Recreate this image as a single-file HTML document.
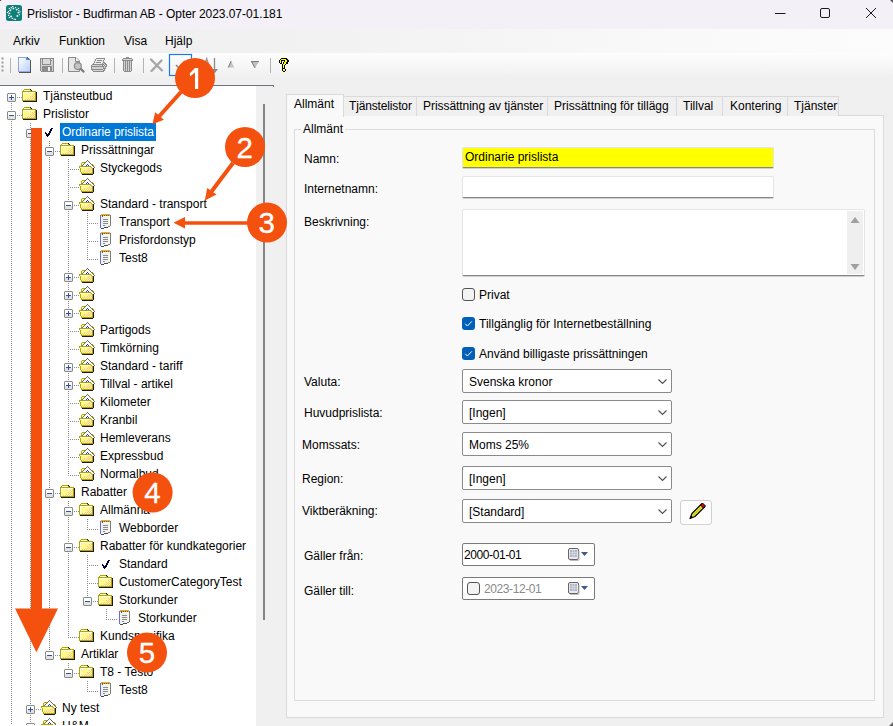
<!DOCTYPE html>
<html><head><meta charset="utf-8">
<style>
*{margin:0;padding:0;box-sizing:border-box}
html,body{width:893px;height:726px;overflow:hidden;background:#f0f0f0;font-family:"Liberation Sans",sans-serif;font-size:12px;color:#000}
.abs{position:absolute}
#title{position:absolute;left:0;top:0;width:893px;height:29px;background:#f3f0f8}
#menu{position:absolute;left:0;top:29px;width:893px;height:24px;background:linear-gradient(to right,#efefef 0%,#f1f1f1 30%,#f5f5f5 55%,#f9f9f9 75%,#fcfcfc 100%)}
#tb{position:absolute;left:0;top:53px;width:893px;height:25px;background:linear-gradient(#fdfdfd,#f0f0f0)}
.mi{position:absolute;top:34px;font-size:12px}
#tree{position:absolute;left:0;top:85px;width:274px;height:641px;background:#f0f0f0;border-top:1px solid #6d737d}
#treew{position:absolute;left:0;top:86px;width:256px;height:640px;background:#fff;overflow:hidden}
.tt{position:absolute;height:18px;line-height:18px;white-space:nowrap;font-size:12px;padding:0 2px 0 0}
.sel{background:#0078d7;color:#fff;padding:0 0 0 2px}
.dv{stroke:#8c8c8c;stroke-width:1;stroke-dasharray:1 1}
.dh{stroke:#8c8c8c;stroke-width:1;stroke-dasharray:1 1}
.tab{position:absolute;top:96px;height:20px;border:1px solid #dadada;border-bottom:none;background:#f0f0f0;line-height:18px;padding-left:5px;white-space:nowrap}
.lbl{position:absolute;white-space:nowrap;line-height:14px}
.combo{position:absolute;left:462px;width:210px;height:24px;border:1px solid #8a8a8a;border-radius:2px;background:#fff;line-height:24px;padding-left:6px}
.orn{position:absolute;border-radius:50%;background:#f4511e;color:#fff;font-size:28px;text-align:center;width:40px;height:40px;line-height:40px}
</style></head><body>
<div id="title">
  
  <div class="abs" style="left:27px;top:6px;font-size:12px;line-height:16px;letter-spacing:-0.06px">Prislistor - Budfirman AB - Opter 2023.07-01.181</div>
</div>
<div id="menu">
</div>
<div class="mi" style="left:13px">Arkiv</div>
<div class="mi" style="left:59px">Funktion</div>
<div class="mi" style="left:124px">Visa</div>
<div class="mi" style="left:165px">Hjälp</div>
<div id="tb"></div>

<svg class="abs" style="left:0;top:0" width="893" height="80">
 <defs><g id="i_save" shape-rendering="crispEdges"><rect x="0" y="0" width="14" height="1" fill="#8c8c8c"/><rect x="0" y="1" width="1" height="1" fill="#8c8c8c"/><rect x="1" y="1" width="1" height="1" fill="#d2d2d2"/><rect x="2" y="1" width="1" height="1" fill="#8c8c8c"/><rect x="3" y="1" width="7" height="1" fill="#dadada"/><rect x="10" y="1" width="1" height="1" fill="#8c8c8c"/><rect x="11" y="1" width="1" height="1" fill="#ececec"/><rect x="12" y="1" width="1" height="1" fill="#d2d2d2"/><rect x="13" y="1" width="1" height="1" fill="#8c8c8c"/><rect x="0" y="2" width="1" height="1" fill="#8c8c8c"/><rect x="1" y="2" width="1" height="1" fill="#d2d2d2"/><rect x="2" y="2" width="1" height="1" fill="#8c8c8c"/><rect x="3" y="2" width="7" height="1" fill="#dadada"/><rect x="10" y="2" width="2" height="1" fill="#8c8c8c"/><rect x="12" y="2" width="1" height="1" fill="#d2d2d2"/><rect x="13" y="2" width="1" height="1" fill="#8c8c8c"/><rect x="0" y="3" width="1" height="1" fill="#8c8c8c"/><rect x="1" y="3" width="1" height="1" fill="#d2d2d2"/><rect x="2" y="3" width="1" height="1" fill="#8c8c8c"/><rect x="3" y="3" width="7" height="1" fill="#dadada"/><rect x="10" y="3" width="1" height="1" fill="#8c8c8c"/><rect x="11" y="3" width="2" height="1" fill="#d2d2d2"/><rect x="13" y="3" width="1" height="1" fill="#8c8c8c"/><rect x="0" y="4" width="1" height="1" fill="#8c8c8c"/><rect x="1" y="4" width="1" height="1" fill="#d2d2d2"/><rect x="2" y="4" width="1" height="1" fill="#8c8c8c"/><rect x="3" y="4" width="7" height="1" fill="#dadada"/><rect x="10" y="4" width="1" height="1" fill="#8c8c8c"/><rect x="11" y="4" width="2" height="1" fill="#d2d2d2"/><rect x="13" y="4" width="1" height="1" fill="#8c8c8c"/><rect x="0" y="5" width="1" height="1" fill="#8c8c8c"/><rect x="1" y="5" width="1" height="1" fill="#d2d2d2"/><rect x="2" y="5" width="1" height="1" fill="#8c8c8c"/><rect x="3" y="5" width="7" height="1" fill="#dadada"/><rect x="10" y="5" width="1" height="1" fill="#8c8c8c"/><rect x="11" y="5" width="2" height="1" fill="#d2d2d2"/><rect x="13" y="5" width="1" height="1" fill="#8c8c8c"/><rect x="0" y="6" width="1" height="1" fill="#8c8c8c"/><rect x="1" y="6" width="1" height="1" fill="#d2d2d2"/><rect x="2" y="6" width="9" height="1" fill="#8c8c8c"/><rect x="11" y="6" width="2" height="1" fill="#d2d2d2"/><rect x="13" y="6" width="1" height="1" fill="#8c8c8c"/><rect x="0" y="7" width="1" height="1" fill="#8c8c8c"/><rect x="1" y="7" width="12" height="1" fill="#d2d2d2"/><rect x="13" y="7" width="1" height="1" fill="#8c8c8c"/><rect x="0" y="8" width="1" height="1" fill="#8c8c8c"/><rect x="1" y="8" width="1" height="1" fill="#d2d2d2"/><rect x="2" y="8" width="10" height="1" fill="#8c8c8c"/><rect x="12" y="8" width="1" height="1" fill="#d2d2d2"/><rect x="13" y="8" width="1" height="1" fill="#8c8c8c"/><rect x="0" y="9" width="1" height="1" fill="#8c8c8c"/><rect x="1" y="9" width="1" height="1" fill="#d2d2d2"/><rect x="2" y="9" width="6" height="1" fill="#8c8c8c"/><rect x="8" y="9" width="2" height="1" fill="#ececec"/><rect x="10" y="9" width="2" height="1" fill="#8c8c8c"/><rect x="12" y="9" width="1" height="1" fill="#d2d2d2"/><rect x="13" y="9" width="1" height="1" fill="#8c8c8c"/><rect x="0" y="10" width="1" height="1" fill="#8c8c8c"/><rect x="1" y="10" width="1" height="1" fill="#d2d2d2"/><rect x="2" y="10" width="6" height="1" fill="#8c8c8c"/><rect x="8" y="10" width="2" height="1" fill="#ececec"/><rect x="10" y="10" width="2" height="1" fill="#8c8c8c"/><rect x="12" y="10" width="1" height="1" fill="#d2d2d2"/><rect x="13" y="10" width="1" height="1" fill="#8c8c8c"/><rect x="0" y="11" width="1" height="1" fill="#8c8c8c"/><rect x="1" y="11" width="1" height="1" fill="#d2d2d2"/><rect x="2" y="11" width="6" height="1" fill="#8c8c8c"/><rect x="8" y="11" width="2" height="1" fill="#ececec"/><rect x="10" y="11" width="2" height="1" fill="#8c8c8c"/><rect x="12" y="11" width="1" height="1" fill="#d2d2d2"/><rect x="13" y="11" width="1" height="1" fill="#8c8c8c"/><rect x="0" y="12" width="1" height="1" fill="#8c8c8c"/><rect x="1" y="12" width="1" height="1" fill="#d2d2d2"/><rect x="2" y="12" width="6" height="1" fill="#8c8c8c"/><rect x="8" y="12" width="2" height="1" fill="#ececec"/><rect x="10" y="12" width="2" height="1" fill="#8c8c8c"/><rect x="12" y="12" width="1" height="1" fill="#d2d2d2"/><rect x="13" y="12" width="1" height="1" fill="#8c8c8c"/><rect x="1" y="13" width="13" height="1" fill="#8c8c8c"/></g><g id="i_print" shape-rendering="crispEdges"><rect x="6" y="0" width="9" height="1" fill="#8c8c8c"/><rect x="5" y="1" width="1" height="1" fill="#8c8c8c"/><rect x="6" y="1" width="8" height="1" fill="#ececec"/><rect x="14" y="1" width="1" height="1" fill="#8c8c8c"/><rect x="5" y="2" width="1" height="1" fill="#8c8c8c"/><rect x="6" y="2" width="1" height="1" fill="#ececec"/><rect x="7" y="2" width="5" height="1" fill="#8c8c8c"/><rect x="12" y="2" width="1" height="1" fill="#ececec"/><rect x="13" y="2" width="1" height="1" fill="#8c8c8c"/><rect x="4" y="3" width="1" height="1" fill="#8c8c8c"/><rect x="5" y="3" width="8" height="1" fill="#ececec"/><rect x="13" y="3" width="1" height="1" fill="#8c8c8c"/><rect x="4" y="4" width="1" height="1" fill="#8c8c8c"/><rect x="5" y="4" width="1" height="1" fill="#ececec"/><rect x="6" y="4" width="5" height="1" fill="#8c8c8c"/><rect x="11" y="4" width="2" height="1" fill="#ececec"/><rect x="13" y="4" width="2" height="1" fill="#8c8c8c"/><rect x="3" y="5" width="1" height="1" fill="#8c8c8c"/><rect x="4" y="5" width="8" height="1" fill="#ececec"/><rect x="12" y="5" width="1" height="1" fill="#8c8c8c"/><rect x="13" y="5" width="1" height="1" fill="#d2d2d2"/><rect x="14" y="5" width="2" height="1" fill="#8c8c8c"/><rect x="2" y="6" width="12" height="1" fill="#8c8c8c"/><rect x="14" y="6" width="1" height="1" fill="#d2d2d2"/><rect x="15" y="6" width="2" height="1" fill="#8c8c8c"/><rect x="1" y="7" width="1" height="1" fill="#8c8c8c"/><rect x="2" y="7" width="10" height="1" fill="#d2d2d2"/><rect x="12" y="7" width="1" height="1" fill="#8c8c8c"/><rect x="13" y="7" width="1" height="1" fill="#d2d2d2"/><rect x="14" y="7" width="1" height="1" fill="#8c8c8c"/><rect x="15" y="7" width="1" height="1" fill="#d2d2d2"/><rect x="16" y="7" width="1" height="1" fill="#8c8c8c"/><rect x="1" y="8" width="13" height="1" fill="#8c8c8c"/><rect x="14" y="8" width="1" height="1" fill="#d2d2d2"/><rect x="15" y="8" width="2" height="1" fill="#8c8c8c"/><rect x="1" y="9" width="1" height="1" fill="#8c8c8c"/><rect x="2" y="9" width="11" height="1" fill="#d2d2d2"/><rect x="13" y="9" width="1" height="1" fill="#8c8c8c"/><rect x="14" y="9" width="1" height="1" fill="#d2d2d2"/><rect x="15" y="9" width="1" height="1" fill="#8c8c8c"/><rect x="1" y="10" width="1" height="1" fill="#8c8c8c"/><rect x="2" y="10" width="11" height="1" fill="#d2d2d2"/><rect x="13" y="10" width="3" height="1" fill="#8c8c8c"/><rect x="1" y="11" width="12" height="1" fill="#8c8c8c"/><rect x="13" y="11" width="1" height="1" fill="#d2d2d2"/><rect x="14" y="11" width="1" height="1" fill="#8c8c8c"/><rect x="2" y="12" width="1" height="1" fill="#8c8c8c"/><rect x="3" y="12" width="10" height="1" fill="#d2d2d2"/><rect x="13" y="12" width="2" height="1" fill="#8c8c8c"/><rect x="3" y="13" width="11" height="1" fill="#8c8c8c"/></g><g id="i_trash" shape-rendering="crispEdges"><rect x="4" y="0" width="3" height="1" fill="#8c8c8c"/><rect x="1" y="1" width="9" height="1" fill="#8c8c8c"/><rect x="0" y="2" width="1" height="1" fill="#8c8c8c"/><rect x="1" y="2" width="9" height="1" fill="#d2d2d2"/><rect x="10" y="2" width="1" height="1" fill="#8c8c8c"/><rect x="0" y="3" width="11" height="1" fill="#8c8c8c"/><rect x="1" y="4" width="1" height="1" fill="#8c8c8c"/><rect x="2" y="4" width="1" height="1" fill="#d2d2d2"/><rect x="3" y="4" width="1" height="1" fill="#8c8c8c"/><rect x="4" y="4" width="1" height="1" fill="#d2d2d2"/><rect x="5" y="4" width="1" height="1" fill="#8c8c8c"/><rect x="6" y="4" width="1" height="1" fill="#d2d2d2"/><rect x="7" y="4" width="1" height="1" fill="#8c8c8c"/><rect x="8" y="4" width="1" height="1" fill="#d2d2d2"/><rect x="9" y="4" width="1" height="1" fill="#8c8c8c"/><rect x="1" y="5" width="1" height="1" fill="#8c8c8c"/><rect x="2" y="5" width="1" height="1" fill="#d2d2d2"/><rect x="3" y="5" width="1" height="1" fill="#8c8c8c"/><rect x="4" y="5" width="1" height="1" fill="#d2d2d2"/><rect x="5" y="5" width="1" height="1" fill="#8c8c8c"/><rect x="6" y="5" width="1" height="1" fill="#d2d2d2"/><rect x="7" y="5" width="1" height="1" fill="#8c8c8c"/><rect x="8" y="5" width="1" height="1" fill="#d2d2d2"/><rect x="9" y="5" width="1" height="1" fill="#8c8c8c"/><rect x="1" y="6" width="1" height="1" fill="#8c8c8c"/><rect x="2" y="6" width="1" height="1" fill="#d2d2d2"/><rect x="3" y="6" width="1" height="1" fill="#8c8c8c"/><rect x="4" y="6" width="1" height="1" fill="#d2d2d2"/><rect x="5" y="6" width="1" height="1" fill="#8c8c8c"/><rect x="6" y="6" width="1" height="1" fill="#d2d2d2"/><rect x="7" y="6" width="1" height="1" fill="#8c8c8c"/><rect x="8" y="6" width="1" height="1" fill="#d2d2d2"/><rect x="9" y="6" width="1" height="1" fill="#8c8c8c"/><rect x="1" y="7" width="1" height="1" fill="#8c8c8c"/><rect x="2" y="7" width="1" height="1" fill="#d2d2d2"/><rect x="3" y="7" width="1" height="1" fill="#8c8c8c"/><rect x="4" y="7" width="1" height="1" fill="#d2d2d2"/><rect x="5" y="7" width="1" height="1" fill="#8c8c8c"/><rect x="6" y="7" width="1" height="1" fill="#d2d2d2"/><rect x="7" y="7" width="1" height="1" fill="#8c8c8c"/><rect x="8" y="7" width="1" height="1" fill="#d2d2d2"/><rect x="9" y="7" width="1" height="1" fill="#8c8c8c"/><rect x="1" y="8" width="1" height="1" fill="#8c8c8c"/><rect x="2" y="8" width="1" height="1" fill="#d2d2d2"/><rect x="3" y="8" width="1" height="1" fill="#8c8c8c"/><rect x="4" y="8" width="1" height="1" fill="#d2d2d2"/><rect x="5" y="8" width="1" height="1" fill="#8c8c8c"/><rect x="6" y="8" width="1" height="1" fill="#d2d2d2"/><rect x="7" y="8" width="1" height="1" fill="#8c8c8c"/><rect x="8" y="8" width="1" height="1" fill="#d2d2d2"/><rect x="9" y="8" width="1" height="1" fill="#8c8c8c"/><rect x="1" y="9" width="1" height="1" fill="#8c8c8c"/><rect x="2" y="9" width="1" height="1" fill="#d2d2d2"/><rect x="3" y="9" width="1" height="1" fill="#8c8c8c"/><rect x="4" y="9" width="1" height="1" fill="#d2d2d2"/><rect x="5" y="9" width="1" height="1" fill="#8c8c8c"/><rect x="6" y="9" width="1" height="1" fill="#d2d2d2"/><rect x="7" y="9" width="1" height="1" fill="#8c8c8c"/><rect x="8" y="9" width="1" height="1" fill="#d2d2d2"/><rect x="9" y="9" width="1" height="1" fill="#8c8c8c"/><rect x="1" y="10" width="1" height="1" fill="#8c8c8c"/><rect x="2" y="10" width="1" height="1" fill="#d2d2d2"/><rect x="3" y="10" width="1" height="1" fill="#8c8c8c"/><rect x="4" y="10" width="1" height="1" fill="#d2d2d2"/><rect x="5" y="10" width="1" height="1" fill="#8c8c8c"/><rect x="6" y="10" width="1" height="1" fill="#d2d2d2"/><rect x="7" y="10" width="1" height="1" fill="#8c8c8c"/><rect x="8" y="10" width="1" height="1" fill="#d2d2d2"/><rect x="9" y="10" width="1" height="1" fill="#8c8c8c"/><rect x="1" y="11" width="1" height="1" fill="#8c8c8c"/><rect x="2" y="11" width="1" height="1" fill="#d2d2d2"/><rect x="3" y="11" width="1" height="1" fill="#8c8c8c"/><rect x="4" y="11" width="1" height="1" fill="#d2d2d2"/><rect x="5" y="11" width="1" height="1" fill="#8c8c8c"/><rect x="6" y="11" width="1" height="1" fill="#d2d2d2"/><rect x="7" y="11" width="1" height="1" fill="#8c8c8c"/><rect x="8" y="11" width="1" height="1" fill="#d2d2d2"/><rect x="9" y="11" width="1" height="1" fill="#8c8c8c"/><rect x="1" y="12" width="1" height="1" fill="#8c8c8c"/><rect x="2" y="12" width="1" height="1" fill="#d2d2d2"/><rect x="3" y="12" width="1" height="1" fill="#8c8c8c"/><rect x="4" y="12" width="1" height="1" fill="#d2d2d2"/><rect x="5" y="12" width="1" height="1" fill="#8c8c8c"/><rect x="6" y="12" width="1" height="1" fill="#d2d2d2"/><rect x="7" y="12" width="1" height="1" fill="#8c8c8c"/><rect x="8" y="12" width="1" height="1" fill="#d2d2d2"/><rect x="9" y="12" width="1" height="1" fill="#8c8c8c"/><rect x="1" y="13" width="1" height="1" fill="#8c8c8c"/><rect x="2" y="13" width="1" height="1" fill="#d2d2d2"/><rect x="3" y="13" width="1" height="1" fill="#8c8c8c"/><rect x="4" y="13" width="1" height="1" fill="#d2d2d2"/><rect x="5" y="13" width="1" height="1" fill="#8c8c8c"/><rect x="6" y="13" width="1" height="1" fill="#d2d2d2"/><rect x="7" y="13" width="1" height="1" fill="#8c8c8c"/><rect x="8" y="13" width="1" height="1" fill="#d2d2d2"/><rect x="9" y="13" width="1" height="1" fill="#8c8c8c"/><rect x="2" y="14" width="7" height="1" fill="#8c8c8c"/></g><g id="i_help" shape-rendering="crispEdges"><rect x="2" y="0" width="6" height="1" fill="#000000"/><rect x="1" y="1" width="1" height="1" fill="#000000"/><rect x="2" y="1" width="5" height="1" fill="#ffff00"/><rect x="7" y="1" width="2" height="1" fill="#000000"/><rect x="0" y="2" width="1" height="1" fill="#000000"/><rect x="1" y="2" width="1" height="1" fill="#ffff00"/><rect x="2" y="2" width="4" height="1" fill="#000000"/><rect x="6" y="2" width="2" height="1" fill="#ffff00"/><rect x="8" y="2" width="2" height="1" fill="#000000"/><rect x="0" y="3" width="1" height="1" fill="#000000"/><rect x="1" y="3" width="1" height="1" fill="#ffff00"/><rect x="2" y="3" width="1" height="1" fill="#000000"/><rect x="3" y="3" width="2" height="1" fill="#f0f0f0"/><rect x="5" y="3" width="1" height="1" fill="#000000"/><rect x="6" y="3" width="2" height="1" fill="#ffff00"/><rect x="8" y="3" width="2" height="1" fill="#000000"/><rect x="0" y="4" width="1" height="1" fill="#000000"/><rect x="1" y="4" width="1" height="1" fill="#ffff00"/><rect x="2" y="4" width="1" height="1" fill="#000000"/><rect x="3" y="4" width="1" height="1" fill="#f0f0f0"/><rect x="4" y="4" width="1" height="1" fill="#000000"/><rect x="5" y="4" width="2" height="1" fill="#ffff00"/><rect x="7" y="4" width="2" height="1" fill="#000000"/><rect x="1" y="5" width="2" height="1" fill="#000000"/><rect x="3" y="5" width="1" height="1" fill="#f0f0f0"/><rect x="4" y="5" width="1" height="1" fill="#000000"/><rect x="5" y="5" width="2" height="1" fill="#ffff00"/><rect x="7" y="5" width="2" height="1" fill="#000000"/><rect x="3" y="6" width="1" height="1" fill="#000000"/><rect x="4" y="6" width="2" height="1" fill="#ffff00"/><rect x="6" y="6" width="1" height="1" fill="#000000"/><rect x="3" y="7" width="1" height="1" fill="#000000"/><rect x="4" y="7" width="1" height="1" fill="#ffff00"/><rect x="5" y="7" width="1" height="1" fill="#000000"/><rect x="3" y="8" width="1" height="1" fill="#000000"/><rect x="4" y="8" width="1" height="1" fill="#ffff00"/><rect x="5" y="8" width="1" height="1" fill="#000000"/><rect x="3" y="9" width="1" height="1" fill="#000000"/><rect x="4" y="9" width="1" height="1" fill="#ffff00"/><rect x="5" y="9" width="1" height="1" fill="#000000"/><rect x="3" y="10" width="3" height="1" fill="#000000"/><rect x="3" y="11" width="1" height="1" fill="#000000"/><rect x="4" y="11" width="2" height="1" fill="#ffff00"/><rect x="6" y="11" width="1" height="1" fill="#000000"/><rect x="3" y="12" width="1" height="1" fill="#000000"/><rect x="4" y="12" width="2" height="1" fill="#ffff00"/><rect x="6" y="12" width="1" height="1" fill="#000000"/><rect x="4" y="13" width="2" height="1" fill="#000000"/></g>
  <linearGradient id="ndg" x1="0" y1="0" x2="1" y2="1"><stop offset="0" stop-color="#ffffff"/><stop offset="1" stop-color="#b4d0f8"/></linearGradient>
 </defs>
 <!-- title icon -->
 <rect x="6" y="5" width="16" height="16" rx="2.5" fill="#0f7f7a"/>
 <g fill="#fff"><circle cx="13.4" cy="8.4" r="0.95"/><circle cx="16.7" cy="9.6" r="0.95"/><circle cx="18.4" cy="12.6" r="0.95"/><circle cx="17.4" cy="15.9" r="0.95"/><circle cx="10.4" cy="10.3" r="0.95"/><circle cx="9.4" cy="13.4" r="0.95"/><circle cx="11.1" cy="16.4" r="0.95"/><circle cx="15.6" cy="7.6" r="0.7"/><circle cx="18.5" cy="8.4" r="0.7"/><circle cx="18.9" cy="10.6" r="0.7"/><circle cx="20.0" cy="11.9" r="0.7"/><circle cx="19.4" cy="14.6" r="0.7"/><circle cx="11.3" cy="7.8" r="0.7"/><circle cx="9.4" cy="8.4" r="0.7"/><circle cx="8.4" cy="11.4" r="0.7"/><circle cx="7.6" cy="12.6" r="0.7"/><circle cx="8.6" cy="15.4" r="0.7"/><circle cx="9.4" cy="17.5" r="0.7"/><circle cx="12.2" cy="18.2" r="0.7"/><circle cx="14.2" cy="19.2" r="0.7"/><circle cx="15.4" cy="19.4" r="0.7"/><circle cx="12.7" cy="6.5" r="0.7"/></g>
 <!-- window controls -->
 <path d="M775 13.5h10.5" stroke="#1a1a1a" stroke-width="1"/>
 <rect x="820.5" y="8.5" width="9" height="9" rx="1.5" fill="none" stroke="#1a1a1a" stroke-width="1"/>
 <path d="M866 8l10 10M876 8l-10 10" stroke="#1a1a1a" stroke-width="1"/>
 <!-- toolbar -->
 <g fill="#9a9a9a"><rect x="1.5" y="57.5" width="2" height="2"/><rect x="1.5" y="61.5" width="2" height="2"/><rect x="1.5" y="65.5" width="2" height="2"/><rect x="1.5" y="69.5" width="2" height="2"/></g>
 <g stroke="#b4b4b4" stroke-width="1"><path d="M10.5 58v15M62.5 58v15M114.5 58v15M143.5 58v15M270.5 58v15"/></g>
 <!-- new -->
 <g shape-rendering="crispEdges">
  <rect x="19" y="58" width="11" height="14" fill="url(#ndg)"/>
  <rect x="18" y="57" width="9" height="1" fill="#8ea2de"/>
  <rect x="18" y="57" width="1" height="15" fill="#8ea2de"/>
  <rect x="19" y="71" width="11" height="1" fill="#a4a6e4"/>
  <rect x="30" y="60" width="1" height="13" fill="#555"/>
  <rect x="19" y="72" width="12" height="1" fill="#555"/>
  <rect x="27" y="57" width="1" height="1" fill="#555"/><rect x="28" y="58" width="1" height="1" fill="#555"/><rect x="29" y="59" width="1" height="1" fill="#555"/>
  <rect x="26" y="58" width="2" height="1" fill="#3a98f0"/><rect x="26" y="59" width="3" height="1" fill="#3a98f0"/>
 </g>
 <use href="#i_save" x="40" y="58"/>
 <!-- preview -->
 <path d="M68.5 57.5h7.5l3.5 3.5v10.5h-11z" fill="#e6e6e6" stroke="#8a8a8a"/>
 <path d="M75.5 57.5v4h4" fill="#f6f6f6" stroke="#8a8a8a"/>
 <circle cx="77.9" cy="66.1" r="3.5" fill="#c4c4c4" stroke="#8a8a8a" stroke-width="1.1"/>
 <path d="M80.8 69l2.8 2.6" stroke="#7a7a7a" stroke-width="2.2" stroke-linecap="round"/>
 <use href="#i_print" x="90" y="58"/>
 <use href="#i_trash" x="122" y="57"/>
 <!-- X -->
 <path d="M151 59.5l11 11M161.5 60.5l-10 10.5" stroke="#a6a6a6" stroke-width="2.4" stroke-linecap="round"/>
 <!-- blue box -->
 <rect x="169.5" y="54.5" width="22" height="21" fill="none" stroke="#1a7be0" stroke-width="1.2"/>
 <path d="M176 65l3 3 6-7" fill="none" stroke="#888" stroke-width="1.5"/>
 <!-- sort -->
 <path d="M203.5 68.5l3.2-10 3.3 10" fill="none" stroke="#9a9a9a" stroke-width="1.3"/>
 <path d="M214.5 58v13" stroke="#8a8a8a" stroke-width="1.3"/>
 <path d="M211 69h7l-3.5 4.5z" fill="#8a8a8a"/>
 <!-- up/down -->
 <path d="M228 67.5h6.2l-3.2-6.4z" fill="#c4c4c4"/>
 <path d="M228.3 67.5l2.8-6.4" stroke="#7a7a7a" stroke-width="1"/>
 <path d="M251 61.5h8l-4 6.5z" fill="#c0c0c0"/>
 <path d="M251 61.5h8M251.5 61.5l3.5 6.5" stroke="#7a7a7a" stroke-width="1"/>
 <!-- help -->
 <use href="#i_help" x="279" y="58"/>
</svg>
<div id="tree"></div>
<div id="treew">
</div>
<div class="abs" style="left:0;top:86px;width:256px;height:639px;overflow:hidden">
<svg width="256" height="639" viewBox="0 86 256 639" style="position:absolute;left:0;top:0">
<defs><g id="folder" shape-rendering="crispEdges"><rect x="2" y="2" width="6" height="1" fill="#b0a600"/><rect x="8" y="2" width="1" height="1" fill="#1a1a1a"/><rect x="1" y="3" width="1" height="1" fill="#b0a600"/><rect x="2" y="3" width="6" height="1" fill="#fffff0"/><rect x="8" y="3" width="1" height="1" fill="#b0a600"/><rect x="9" y="3" width="1" height="1" fill="#1a1a1a"/><rect x="0" y="4" width="14" height="1" fill="#b0a600"/><rect x="0" y="5" width="1" height="1" fill="#b0a600"/><rect x="1" y="5" width="12" height="1" fill="#fffff0"/><rect x="13" y="5" width="1" height="1" fill="#b0a600"/><rect x="14" y="5" width="1" height="1" fill="#1a1a1a"/><rect x="0" y="6" width="1" height="1" fill="#b0a600"/><rect x="1" y="6" width="1" height="1" fill="#fffff0"/><rect x="2" y="6" width="10" height="1" fill="#fff98c"/><rect x="12" y="6" width="1" height="1" fill="#f9c79a"/><rect x="13" y="6" width="1" height="1" fill="#b0a600"/><rect x="14" y="6" width="1" height="1" fill="#1a1a1a"/><rect x="0" y="7" width="1" height="1" fill="#b0a600"/><rect x="1" y="7" width="1" height="1" fill="#fffff0"/><rect x="2" y="7" width="8" height="1" fill="#fff98c"/><rect x="10" y="7" width="1" height="1" fill="#f9c79a"/><rect x="11" y="7" width="1" height="1" fill="#fff98c"/><rect x="12" y="7" width="1" height="1" fill="#f9c79a"/><rect x="13" y="7" width="1" height="1" fill="#b0a600"/><rect x="14" y="7" width="1" height="1" fill="#1a1a1a"/><rect x="0" y="8" width="1" height="1" fill="#b0a600"/><rect x="1" y="8" width="1" height="1" fill="#fffff0"/><rect x="2" y="8" width="9" height="1" fill="#fff98c"/><rect x="11" y="8" width="1" height="1" fill="#f9c79a"/><rect x="12" y="8" width="1" height="1" fill="#fff98c"/><rect x="13" y="8" width="1" height="1" fill="#b0a600"/><rect x="14" y="8" width="1" height="1" fill="#1a1a1a"/><rect x="0" y="9" width="1" height="1" fill="#b0a600"/><rect x="1" y="9" width="1" height="1" fill="#fffff0"/><rect x="2" y="9" width="6" height="1" fill="#fff98c"/><rect x="8" y="9" width="1" height="1" fill="#f9c79a"/><rect x="9" y="9" width="1" height="1" fill="#fff98c"/><rect x="10" y="9" width="1" height="1" fill="#f9c79a"/><rect x="11" y="9" width="1" height="1" fill="#fff98c"/><rect x="12" y="9" width="1" height="1" fill="#f9c79a"/><rect x="13" y="9" width="1" height="1" fill="#b0a600"/><rect x="14" y="9" width="1" height="1" fill="#1a1a1a"/><rect x="0" y="10" width="1" height="1" fill="#b0a600"/><rect x="1" y="10" width="1" height="1" fill="#fffff0"/><rect x="2" y="10" width="7" height="1" fill="#fff98c"/><rect x="9" y="10" width="1" height="1" fill="#f9c79a"/><rect x="10" y="10" width="1" height="1" fill="#fff98c"/><rect x="11" y="10" width="1" height="1" fill="#f9c79a"/><rect x="12" y="10" width="1" height="1" fill="#fff98c"/><rect x="13" y="10" width="1" height="1" fill="#b0a600"/><rect x="14" y="10" width="1" height="1" fill="#1a1a1a"/><rect x="0" y="11" width="1" height="1" fill="#b0a600"/><rect x="1" y="11" width="1" height="1" fill="#fffff0"/><rect x="2" y="11" width="4" height="1" fill="#fff98c"/><rect x="6" y="11" width="1" height="1" fill="#f9c79a"/><rect x="7" y="11" width="1" height="1" fill="#fff98c"/><rect x="8" y="11" width="1" height="1" fill="#f9c79a"/><rect x="9" y="11" width="1" height="1" fill="#fff98c"/><rect x="10" y="11" width="1" height="1" fill="#f9c79a"/><rect x="11" y="11" width="1" height="1" fill="#fff98c"/><rect x="12" y="11" width="1" height="1" fill="#f9c79a"/><rect x="13" y="11" width="1" height="1" fill="#b0a600"/><rect x="14" y="11" width="1" height="1" fill="#1a1a1a"/><rect x="0" y="12" width="1" height="1" fill="#b0a600"/><rect x="1" y="12" width="1" height="1" fill="#fffff0"/><rect x="2" y="12" width="1" height="1" fill="#fff98c"/><rect x="3" y="12" width="1" height="1" fill="#f9c79a"/><rect x="4" y="12" width="1" height="1" fill="#fff98c"/><rect x="5" y="12" width="1" height="1" fill="#f9c79a"/><rect x="6" y="12" width="1" height="1" fill="#fff98c"/><rect x="7" y="12" width="1" height="1" fill="#f9c79a"/><rect x="8" y="12" width="1" height="1" fill="#fff98c"/><rect x="9" y="12" width="1" height="1" fill="#f9c79a"/><rect x="10" y="12" width="1" height="1" fill="#fff98c"/><rect x="11" y="12" width="2" height="1" fill="#f9c79a"/><rect x="13" y="12" width="1" height="1" fill="#b0a600"/><rect x="14" y="12" width="1" height="1" fill="#1a1a1a"/><rect x="0" y="13" width="14" height="1" fill="#b0a600"/><rect x="14" y="13" width="1" height="1" fill="#1a1a1a"/><rect x="1" y="14" width="14" height="1" fill="#1a1a1a"/></g><g id="house" shape-rendering="crispEdges"><rect x="8" y="1" width="1" height="1" fill="#6a6a6a"/><rect x="7" y="2" width="1" height="1" fill="#6a6a6a"/><rect x="8" y="2" width="1" height="1" fill="#fffff0"/><rect x="9" y="2" width="1" height="1" fill="#6a6a6a"/><rect x="3" y="3" width="3" height="1" fill="#b0a600"/><rect x="6" y="3" width="1" height="1" fill="#6a6a6a"/><rect x="7" y="3" width="3" height="1" fill="#fffff0"/><rect x="10" y="3" width="1" height="1" fill="#6a6a6a"/><rect x="2" y="4" width="1" height="1" fill="#b0a600"/><rect x="3" y="4" width="2" height="1" fill="#fff98c"/><rect x="5" y="4" width="1" height="1" fill="#6a6a6a"/><rect x="6" y="4" width="5" height="1" fill="#fffff0"/><rect x="11" y="4" width="1" height="1" fill="#6a6a6a"/><rect x="2" y="5" width="1" height="1" fill="#b0a600"/><rect x="3" y="5" width="1" height="1" fill="#fff98c"/><rect x="4" y="5" width="1" height="1" fill="#6a6a6a"/><rect x="5" y="5" width="3" height="1" fill="#fffff0"/><rect x="8" y="5" width="1" height="1" fill="#1438c0"/><rect x="9" y="5" width="3" height="1" fill="#fffff0"/><rect x="12" y="5" width="1" height="1" fill="#6a6a6a"/><rect x="13" y="5" width="1" height="1" fill="#b0a600"/><rect x="2" y="6" width="1" height="1" fill="#b0a600"/><rect x="3" y="6" width="1" height="1" fill="#6a6a6a"/><rect x="4" y="6" width="3" height="1" fill="#fffff0"/><rect x="7" y="6" width="1" height="1" fill="#1438c0"/><rect x="8" y="6" width="1" height="1" fill="#fffff0"/><rect x="9" y="6" width="1" height="1" fill="#1438c0"/><rect x="10" y="6" width="3" height="1" fill="#fffff0"/><rect x="13" y="6" width="1" height="1" fill="#6a6a6a"/><rect x="14" y="6" width="1" height="1" fill="#b0a600"/><rect x="0" y="7" width="12" height="1" fill="#b0a600"/><rect x="12" y="7" width="2" height="1" fill="#fffff0"/><rect x="14" y="7" width="1" height="1" fill="#6a6a6a"/><rect x="0" y="8" width="1" height="1" fill="#b0a600"/><rect x="1" y="8" width="10" height="1" fill="#fffff0"/><rect x="11" y="8" width="1" height="1" fill="#f9c79a"/><rect x="12" y="8" width="1" height="1" fill="#b0a600"/><rect x="13" y="8" width="2" height="1" fill="#fffff0"/><rect x="15" y="8" width="1" height="1" fill="#6a6a6a"/><rect x="1" y="9" width="1" height="1" fill="#b0a600"/><rect x="2" y="9" width="8" height="1" fill="#fff98c"/><rect x="10" y="9" width="1" height="1" fill="#f9c79a"/><rect x="11" y="9" width="1" height="1" fill="#fff98c"/><rect x="12" y="9" width="1" height="1" fill="#f9c79a"/><rect x="13" y="9" width="1" height="1" fill="#b0a600"/><rect x="14" y="9" width="1" height="1" fill="#1a1a1a"/><rect x="1" y="10" width="1" height="1" fill="#b0a600"/><rect x="2" y="10" width="7" height="1" fill="#fff98c"/><rect x="9" y="10" width="1" height="1" fill="#f9c79a"/><rect x="10" y="10" width="1" height="1" fill="#fff98c"/><rect x="11" y="10" width="1" height="1" fill="#f9c79a"/><rect x="12" y="10" width="1" height="1" fill="#fff98c"/><rect x="13" y="10" width="1" height="1" fill="#b0a600"/><rect x="14" y="10" width="1" height="1" fill="#1a1a1a"/><rect x="1" y="11" width="1" height="1" fill="#b0a600"/><rect x="2" y="11" width="3" height="1" fill="#fff98c"/><rect x="5" y="11" width="1" height="1" fill="#f9c79a"/><rect x="6" y="11" width="2" height="1" fill="#fff98c"/><rect x="8" y="11" width="1" height="1" fill="#f9c79a"/><rect x="9" y="11" width="1" height="1" fill="#fff98c"/><rect x="10" y="11" width="1" height="1" fill="#f9c79a"/><rect x="11" y="11" width="1" height="1" fill="#fff98c"/><rect x="12" y="11" width="1" height="1" fill="#f9c79a"/><rect x="13" y="11" width="1" height="1" fill="#b0a600"/><rect x="14" y="11" width="1" height="1" fill="#1a1a1a"/><rect x="1" y="12" width="1" height="1" fill="#b0a600"/><rect x="2" y="12" width="1" height="1" fill="#fff98c"/><rect x="3" y="12" width="1" height="1" fill="#f9c79a"/><rect x="4" y="12" width="1" height="1" fill="#fff98c"/><rect x="5" y="12" width="1" height="1" fill="#f9c79a"/><rect x="6" y="12" width="1" height="1" fill="#fff98c"/><rect x="7" y="12" width="1" height="1" fill="#f9c79a"/><rect x="8" y="12" width="1" height="1" fill="#fff98c"/><rect x="9" y="12" width="1" height="1" fill="#f9c79a"/><rect x="10" y="12" width="1" height="1" fill="#fff98c"/><rect x="11" y="12" width="1" height="1" fill="#f9c79a"/><rect x="12" y="12" width="1" height="1" fill="#fff98c"/><rect x="13" y="12" width="1" height="1" fill="#b0a600"/><rect x="14" y="12" width="1" height="1" fill="#1a1a1a"/><rect x="2" y="13" width="1" height="1" fill="#b0a600"/><rect x="3" y="13" width="1" height="1" fill="#fff98c"/><rect x="4" y="13" width="1" height="1" fill="#f9c79a"/><rect x="5" y="13" width="1" height="1" fill="#fff98c"/><rect x="6" y="13" width="1" height="1" fill="#f9c79a"/><rect x="7" y="13" width="1" height="1" fill="#fff98c"/><rect x="8" y="13" width="1" height="1" fill="#f9c79a"/><rect x="9" y="13" width="1" height="1" fill="#fff98c"/><rect x="10" y="13" width="1" height="1" fill="#f9c79a"/><rect x="11" y="13" width="1" height="1" fill="#fff98c"/><rect x="12" y="13" width="1" height="1" fill="#f9c79a"/><rect x="13" y="13" width="1" height="1" fill="#b0a600"/><rect x="14" y="13" width="1" height="1" fill="#1a1a1a"/><rect x="2" y="14" width="12" height="1" fill="#b0a600"/><rect x="14" y="14" width="1" height="1" fill="#1a1a1a"/><rect x="3" y="15" width="11" height="1" fill="#1a1a1a"/></g><g id="doc" shape-rendering="crispEdges"><rect x="3" y="1" width="9" height="1" fill="#d6b23a"/><rect x="2" y="2" width="1" height="1" fill="#6c6cd8"/><rect x="3" y="2" width="1" height="1" fill="#d6b23a"/><rect x="4" y="2" width="1" height="1" fill="#8a4a2a"/><rect x="5" y="2" width="1" height="1" fill="#d6b23a"/><rect x="6" y="2" width="1" height="1" fill="#8a4a2a"/><rect x="7" y="2" width="1" height="1" fill="#d6b23a"/><rect x="8" y="2" width="1" height="1" fill="#8a4a2a"/><rect x="9" y="2" width="1" height="1" fill="#d6b23a"/><rect x="10" y="2" width="1" height="1" fill="#8a4a2a"/><rect x="11" y="2" width="1" height="1" fill="#d6b23a"/><rect x="12" y="2" width="1" height="1" fill="#7a7a7a"/><rect x="2" y="3" width="1" height="1" fill="#6c6cd8"/><rect x="3" y="3" width="1" height="1" fill="#eef3f1"/><rect x="4" y="3" width="1" height="1" fill="#8a4a2a"/><rect x="5" y="3" width="1" height="1" fill="#eef3f1"/><rect x="6" y="3" width="1" height="1" fill="#fffff0"/><rect x="7" y="3" width="1" height="1" fill="#eef3f1"/><rect x="8" y="3" width="1" height="1" fill="#fffff0"/><rect x="9" y="3" width="1" height="1" fill="#eef3f1"/><rect x="10" y="3" width="1" height="1" fill="#fffff0"/><rect x="11" y="3" width="1" height="1" fill="#eef3f1"/><rect x="12" y="3" width="1" height="1" fill="#7a7a7a"/><rect x="2" y="4" width="1" height="1" fill="#6c6cd8"/><rect x="3" y="4" width="8" height="1" fill="#eef3f1"/><rect x="11" y="4" width="1" height="1" fill="#fffff0"/><rect x="12" y="4" width="1" height="1" fill="#7a7a7a"/><rect x="2" y="5" width="1" height="1" fill="#6c6cd8"/><rect x="3" y="5" width="8" height="1" fill="#eef3f1"/><rect x="11" y="5" width="1" height="1" fill="#fffff0"/><rect x="12" y="5" width="1" height="1" fill="#7a7a7a"/><rect x="2" y="6" width="1" height="1" fill="#6c6cd8"/><rect x="3" y="6" width="2" height="1" fill="#eef3f1"/><rect x="5" y="6" width="5" height="1" fill="#8c8c8c"/><rect x="10" y="6" width="1" height="1" fill="#eef3f1"/><rect x="11" y="6" width="1" height="1" fill="#fffff0"/><rect x="12" y="6" width="1" height="1" fill="#7a7a7a"/><rect x="2" y="7" width="1" height="1" fill="#6c6cd8"/><rect x="3" y="7" width="8" height="1" fill="#eef3f1"/><rect x="11" y="7" width="1" height="1" fill="#fffff0"/><rect x="12" y="7" width="1" height="1" fill="#7a7a7a"/><rect x="2" y="8" width="1" height="1" fill="#6c6cd8"/><rect x="3" y="8" width="2" height="1" fill="#eef3f1"/><rect x="5" y="8" width="5" height="1" fill="#8c8c8c"/><rect x="10" y="8" width="1" height="1" fill="#eef3f1"/><rect x="11" y="8" width="1" height="1" fill="#fffff0"/><rect x="12" y="8" width="1" height="1" fill="#7a7a7a"/><rect x="2" y="9" width="1" height="1" fill="#6c6cd8"/><rect x="3" y="9" width="8" height="1" fill="#eef3f1"/><rect x="11" y="9" width="1" height="1" fill="#fffff0"/><rect x="12" y="9" width="1" height="1" fill="#7a7a7a"/><rect x="2" y="10" width="1" height="1" fill="#6c6cd8"/><rect x="3" y="10" width="2" height="1" fill="#eef3f1"/><rect x="5" y="10" width="5" height="1" fill="#8c8c8c"/><rect x="10" y="10" width="1" height="1" fill="#eef3f1"/><rect x="11" y="10" width="1" height="1" fill="#fffff0"/><rect x="12" y="10" width="1" height="1" fill="#7a7a7a"/><rect x="2" y="11" width="1" height="1" fill="#6c6cd8"/><rect x="3" y="11" width="8" height="1" fill="#eef3f1"/><rect x="11" y="11" width="1" height="1" fill="#fffff0"/><rect x="12" y="11" width="1" height="1" fill="#7a7a7a"/><rect x="2" y="12" width="1" height="1" fill="#6c6cd8"/><rect x="3" y="12" width="2" height="1" fill="#eef3f1"/><rect x="5" y="12" width="2" height="1" fill="#8c8c8c"/><rect x="7" y="12" width="4" height="1" fill="#eef3f1"/><rect x="11" y="12" width="1" height="1" fill="#fffff0"/><rect x="12" y="12" width="1" height="1" fill="#7a7a7a"/><rect x="2" y="13" width="1" height="1" fill="#6c6cd8"/><rect x="3" y="13" width="7" height="1" fill="#eef3f1"/><rect x="10" y="13" width="2" height="1" fill="#7a7a7a"/><rect x="2" y="14" width="1" height="1" fill="#6c6cd8"/><rect x="3" y="14" width="3" height="1" fill="#eef3f1"/><rect x="6" y="14" width="4" height="1" fill="#4a4a4a"/><rect x="3" y="15" width="3" height="1" fill="#4a4a4a"/></g><g id="check" shape-rendering="crispEdges"><rect x="10" y="5" width="2" height="1" fill="#00003c"/><rect x="9" y="6" width="2" height="1" fill="#00003c"/><rect x="9" y="7" width="2" height="1" fill="#00003c"/><rect x="8" y="8" width="2" height="1" fill="#00003c"/><rect x="4" y="9" width="1" height="1" fill="#00003c"/><rect x="8" y="9" width="2" height="1" fill="#00003c"/><rect x="4" y="10" width="2" height="1" fill="#00003c"/><rect x="7" y="10" width="2" height="1" fill="#00003c"/><rect x="5" y="11" width="4" height="1" fill="#00003c"/><rect x="5" y="12" width="3" height="1" fill="#00003c"/><rect x="6" y="13" width="1" height="1" fill="#00003c"/></g><g id="plus" shape-rendering="crispEdges"><rect x="0" y="0" width="1" height="1" fill="#c8c8c8"/><rect x="1" y="0" width="7" height="1" fill="#8a8a8a"/><rect x="8" y="0" width="1" height="1" fill="#c8c8c8"/><rect x="0" y="1" width="1" height="1" fill="#8a8a8a"/><rect x="1" y="1" width="7" height="1" fill="#ffffff"/><rect x="8" y="1" width="1" height="1" fill="#8a8a8a"/><rect x="0" y="2" width="1" height="1" fill="#8a8a8a"/><rect x="1" y="2" width="3" height="1" fill="#ffffff"/><rect x="4" y="2" width="1" height="1" fill="#3050a0"/><rect x="5" y="2" width="3" height="1" fill="#ffffff"/><rect x="8" y="2" width="1" height="1" fill="#8a8a8a"/><rect x="0" y="3" width="1" height="1" fill="#8a8a8a"/><rect x="1" y="3" width="3" height="1" fill="#ffffff"/><rect x="4" y="3" width="1" height="1" fill="#3050a0"/><rect x="5" y="3" width="3" height="1" fill="#ffffff"/><rect x="8" y="3" width="1" height="1" fill="#8a8a8a"/><rect x="0" y="4" width="1" height="1" fill="#8a8a8a"/><rect x="1" y="4" width="1" height="1" fill="#ffffff"/><rect x="2" y="4" width="5" height="1" fill="#3050a0"/><rect x="7" y="4" width="1" height="1" fill="#ffffff"/><rect x="8" y="4" width="1" height="1" fill="#8a8a8a"/><rect x="0" y="5" width="1" height="1" fill="#8a8a8a"/><rect x="1" y="5" width="3" height="1" fill="#e2e2e2"/><rect x="4" y="5" width="1" height="1" fill="#3050a0"/><rect x="5" y="5" width="3" height="1" fill="#e2e2e2"/><rect x="8" y="5" width="1" height="1" fill="#8a8a8a"/><rect x="0" y="6" width="1" height="1" fill="#8a8a8a"/><rect x="1" y="6" width="3" height="1" fill="#e2e2e2"/><rect x="4" y="6" width="1" height="1" fill="#3050a0"/><rect x="5" y="6" width="3" height="1" fill="#e2e2e2"/><rect x="8" y="6" width="1" height="1" fill="#8a8a8a"/><rect x="0" y="7" width="1" height="1" fill="#8a8a8a"/><rect x="1" y="7" width="7" height="1" fill="#e2e2e2"/><rect x="8" y="7" width="1" height="1" fill="#8a8a8a"/><rect x="0" y="8" width="1" height="1" fill="#c8c8c8"/><rect x="1" y="8" width="7" height="1" fill="#8a8a8a"/><rect x="8" y="8" width="1" height="1" fill="#c8c8c8"/></g><g id="minus" shape-rendering="crispEdges"><rect x="0" y="0" width="1" height="1" fill="#c8c8c8"/><rect x="1" y="0" width="7" height="1" fill="#8a8a8a"/><rect x="8" y="0" width="1" height="1" fill="#c8c8c8"/><rect x="0" y="1" width="1" height="1" fill="#8a8a8a"/><rect x="1" y="1" width="7" height="1" fill="#ffffff"/><rect x="8" y="1" width="1" height="1" fill="#8a8a8a"/><rect x="0" y="2" width="1" height="1" fill="#8a8a8a"/><rect x="1" y="2" width="7" height="1" fill="#ffffff"/><rect x="8" y="2" width="1" height="1" fill="#8a8a8a"/><rect x="0" y="3" width="1" height="1" fill="#8a8a8a"/><rect x="1" y="3" width="7" height="1" fill="#ffffff"/><rect x="8" y="3" width="1" height="1" fill="#8a8a8a"/><rect x="0" y="4" width="1" height="1" fill="#8a8a8a"/><rect x="1" y="4" width="1" height="1" fill="#ffffff"/><rect x="2" y="4" width="5" height="1" fill="#3050a0"/><rect x="7" y="4" width="1" height="1" fill="#ffffff"/><rect x="8" y="4" width="1" height="1" fill="#8a8a8a"/><rect x="0" y="5" width="1" height="1" fill="#8a8a8a"/><rect x="1" y="5" width="7" height="1" fill="#e2e2e2"/><rect x="8" y="5" width="1" height="1" fill="#8a8a8a"/><rect x="0" y="6" width="1" height="1" fill="#8a8a8a"/><rect x="1" y="6" width="7" height="1" fill="#e2e2e2"/><rect x="8" y="6" width="1" height="1" fill="#8a8a8a"/><rect x="0" y="7" width="1" height="1" fill="#8a8a8a"/><rect x="1" y="7" width="7" height="1" fill="#e2e2e2"/><rect x="8" y="7" width="1" height="1" fill="#8a8a8a"/><rect x="0" y="8" width="1" height="1" fill="#c8c8c8"/><rect x="1" y="8" width="7" height="1" fill="#8a8a8a"/><rect x="8" y="8" width="1" height="1" fill="#c8c8c8"/></g></defs>
<line x1="11.5" y1="97" x2="11.5" y2="115" class="dv"/><line x1="11.5" y1="115" x2="11.5" y2="740" class="dv"/><line x1="30.5" y1="133" x2="30.5" y2="709" class="dv"/><line x1="30.5" y1="123" x2="30.5" y2="133" class="dv"/><line x1="49.5" y1="151" x2="49.5" y2="493" class="dv"/><line x1="49.5" y1="141" x2="49.5" y2="151" class="dv"/><line x1="68.5" y1="169" x2="68.5" y2="187" class="dv"/><line x1="68.5" y1="159" x2="68.5" y2="169" class="dv"/><line x1="68.5" y1="187" x2="68.5" y2="205" class="dv"/><line x1="68.5" y1="205" x2="68.5" y2="277" class="dv"/><line x1="87.5" y1="223" x2="87.5" y2="241" class="dv"/><line x1="87.5" y1="213" x2="87.5" y2="223" class="dv"/><line x1="87.5" y1="241" x2="87.5" y2="259" class="dv"/><line x1="68.5" y1="277" x2="68.5" y2="295" class="dv"/><line x1="68.5" y1="295" x2="68.5" y2="313" class="dv"/><line x1="68.5" y1="313" x2="68.5" y2="331" class="dv"/><line x1="68.5" y1="331" x2="68.5" y2="349" class="dv"/><line x1="68.5" y1="349" x2="68.5" y2="367" class="dv"/><line x1="68.5" y1="367" x2="68.5" y2="385" class="dv"/><line x1="68.5" y1="385" x2="68.5" y2="403" class="dv"/><line x1="68.5" y1="403" x2="68.5" y2="421" class="dv"/><line x1="68.5" y1="421" x2="68.5" y2="439" class="dv"/><line x1="68.5" y1="439" x2="68.5" y2="457" class="dv"/><line x1="68.5" y1="457" x2="68.5" y2="475" class="dv"/><line x1="49.5" y1="493" x2="49.5" y2="655" class="dv"/><line x1="68.5" y1="511" x2="68.5" y2="547" class="dv"/><line x1="68.5" y1="501" x2="68.5" y2="511" class="dv"/><line x1="87.5" y1="519" x2="87.5" y2="529" class="dv"/><line x1="68.5" y1="547" x2="68.5" y2="637" class="dv"/><line x1="87.5" y1="565" x2="87.5" y2="583" class="dv"/><line x1="87.5" y1="555" x2="87.5" y2="565" class="dv"/><line x1="87.5" y1="583" x2="87.5" y2="601" class="dv"/><line x1="106.5" y1="609" x2="106.5" y2="619" class="dv"/><line x1="68.5" y1="663" x2="68.5" y2="673" class="dv"/><line x1="87.5" y1="681" x2="87.5" y2="691" class="dv"/><line x1="30.5" y1="709" x2="30.5" y2="727" class="dv"/><line x1="30.5" y1="727" x2="30.5" y2="740" class="dv"/><line x1="11" y1="97.5" x2="22" y2="97.5" class="dh"/><line x1="11" y1="115.5" x2="22" y2="115.5" class="dh"/><line x1="30" y1="133.5" x2="41" y2="133.5" class="dh"/><line x1="49" y1="151.5" x2="60" y2="151.5" class="dh"/><line x1="68" y1="169.5" x2="79" y2="169.5" class="dh"/><line x1="68" y1="187.5" x2="79" y2="187.5" class="dh"/><line x1="68" y1="205.5" x2="79" y2="205.5" class="dh"/><line x1="87" y1="223.5" x2="98" y2="223.5" class="dh"/><line x1="87" y1="241.5" x2="98" y2="241.5" class="dh"/><line x1="87" y1="259.5" x2="98" y2="259.5" class="dh"/><line x1="68" y1="277.5" x2="79" y2="277.5" class="dh"/><line x1="68" y1="295.5" x2="79" y2="295.5" class="dh"/><line x1="68" y1="313.5" x2="79" y2="313.5" class="dh"/><line x1="68" y1="331.5" x2="79" y2="331.5" class="dh"/><line x1="68" y1="349.5" x2="79" y2="349.5" class="dh"/><line x1="68" y1="367.5" x2="79" y2="367.5" class="dh"/><line x1="68" y1="385.5" x2="79" y2="385.5" class="dh"/><line x1="68" y1="403.5" x2="79" y2="403.5" class="dh"/><line x1="68" y1="421.5" x2="79" y2="421.5" class="dh"/><line x1="68" y1="439.5" x2="79" y2="439.5" class="dh"/><line x1="68" y1="457.5" x2="79" y2="457.5" class="dh"/><line x1="68" y1="475.5" x2="79" y2="475.5" class="dh"/><line x1="49" y1="493.5" x2="60" y2="493.5" class="dh"/><line x1="68" y1="511.5" x2="79" y2="511.5" class="dh"/><line x1="87" y1="529.5" x2="98" y2="529.5" class="dh"/><line x1="68" y1="547.5" x2="79" y2="547.5" class="dh"/><line x1="87" y1="565.5" x2="98" y2="565.5" class="dh"/><line x1="87" y1="583.5" x2="98" y2="583.5" class="dh"/><line x1="87" y1="601.5" x2="98" y2="601.5" class="dh"/><line x1="106" y1="619.5" x2="117" y2="619.5" class="dh"/><line x1="68" y1="637.5" x2="79" y2="637.5" class="dh"/><line x1="49" y1="655.5" x2="60" y2="655.5" class="dh"/><line x1="68" y1="673.5" x2="79" y2="673.5" class="dh"/><line x1="87" y1="691.5" x2="98" y2="691.5" class="dh"/><line x1="30" y1="709.5" x2="41" y2="709.5" class="dh"/><line x1="30" y1="727.5" x2="41" y2="727.5" class="dh"/><use href="#plus" x="7" y="93"/><use href="#folder" x="22" y="87"/><use href="#minus" x="7" y="111"/><use href="#folder" x="22" y="105"/><use href="#minus" x="26" y="129"/><use href="#check" x="41" y="123"/><use href="#minus" x="45" y="147"/><use href="#folder" x="60" y="141"/><use href="#house" x="79" y="159"/><use href="#house" x="79" y="177"/><use href="#minus" x="64" y="201"/><use href="#house" x="79" y="195"/><use href="#doc" x="98" y="213"/><use href="#doc" x="98" y="231"/><use href="#doc" x="98" y="249"/><use href="#plus" x="64" y="273"/><use href="#house" x="79" y="267"/><use href="#plus" x="64" y="291"/><use href="#house" x="79" y="285"/><use href="#plus" x="64" y="309"/><use href="#house" x="79" y="303"/><use href="#house" x="79" y="321"/><use href="#house" x="79" y="339"/><use href="#plus" x="64" y="363"/><use href="#house" x="79" y="357"/><use href="#plus" x="64" y="381"/><use href="#house" x="79" y="375"/><use href="#house" x="79" y="393"/><use href="#house" x="79" y="411"/><use href="#house" x="79" y="429"/><use href="#house" x="79" y="447"/><use href="#house" x="79" y="465"/><use href="#minus" x="45" y="489"/><use href="#folder" x="60" y="483"/><use href="#minus" x="64" y="507"/><use href="#folder" x="79" y="501"/><use href="#doc" x="98" y="519"/><use href="#minus" x="64" y="543"/><use href="#folder" x="79" y="537"/><use href="#check" x="98" y="555"/><use href="#folder" x="98" y="573"/><use href="#minus" x="83" y="597"/><use href="#folder" x="98" y="591"/><use href="#doc" x="117" y="609"/><use href="#folder" x="79" y="627"/><use href="#minus" x="45" y="651"/><use href="#folder" x="60" y="645"/><use href="#minus" x="64" y="669"/><use href="#folder" x="79" y="663"/><use href="#doc" x="98" y="681"/><use href="#plus" x="26" y="705"/><use href="#house" x="41" y="699"/><use href="#minus" x="26" y="723"/><use href="#house" x="41" y="717"/>
</svg>
<div style="position:absolute;left:0;top:-86px">
<div class="tt" style="left:43px;top:87px">Tjänsteutbud</div><div class="tt" style="left:43px;top:105px">Prislistor</div><div class="tt sel" style="left:60px;top:123px;width:96px;letter-spacing:-0.08px">Ordinarie prislista</div><div class="tt" style="left:81px;top:141px">Prissättningar</div><div class="tt" style="left:100px;top:159px">Styckegods</div><div class="tt" style="left:100px;top:177px"></div><div class="tt" style="left:100px;top:195px">Standard - transport</div><div class="tt" style="left:119px;top:213px">Transport</div><div class="tt" style="left:119px;top:231px">Prisfordonstyp</div><div class="tt" style="left:119px;top:249px">Test8</div><div class="tt" style="left:100px;top:267px"></div><div class="tt" style="left:100px;top:285px"></div><div class="tt" style="left:100px;top:303px"></div><div class="tt" style="left:100px;top:321px">Partigods</div><div class="tt" style="left:100px;top:339px">Timkörning</div><div class="tt" style="left:100px;top:357px">Standard - tariff</div><div class="tt" style="left:100px;top:375px">Tillval - artikel</div><div class="tt" style="left:100px;top:393px">Kilometer</div><div class="tt" style="left:100px;top:411px">Kranbil</div><div class="tt" style="left:100px;top:429px">Hemleverans</div><div class="tt" style="left:100px;top:447px">Expressbud</div><div class="tt" style="left:100px;top:465px">Normalbud</div><div class="tt" style="left:81px;top:483px">Rabatter</div><div class="tt" style="left:100px;top:501px">Allmänna</div><div class="tt" style="left:119px;top:519px">Webborder</div><div class="tt" style="left:100px;top:537px">Rabatter för kundkategorier</div><div class="tt" style="left:119px;top:555px">Standard</div><div class="tt" style="left:119px;top:573px">CustomerCategoryTest</div><div class="tt" style="left:119px;top:591px">Storkunder</div><div class="tt" style="left:138px;top:609px">Storkunder</div><div class="tt" style="left:100px;top:627px">Kundspecifika</div><div class="tt" style="left:81px;top:645px">Artiklar</div><div class="tt" style="left:100px;top:663px">T8 - Testo</div><div class="tt" style="left:119px;top:681px">Test8</div><div class="tt" style="left:62px;top:699px">Ny test</div><div class="tt" style="left:62px;top:717px">H&amp;M</div>
</div>
</div>

<!-- right panel -->
<div class="abs" style="left:286px;top:115px;width:598px;height:603px;background:#f9f9f9;border:1px solid #dadada"></div>
<div class="tab" style="left:343px;width:74px"><span style="position:absolute;left:5px;top:0px;letter-spacing:-0.15px">Tjänstelistor</span></div>
<div class="tab" style="left:416px;width:132px"><span style="position:absolute;left:6px;top:0px;letter-spacing:-0.05px">Prissättning av tjänster</span></div>
<div class="tab" style="left:547px;width:130px"><span style="position:absolute;left:6px;top:0px">Prissättning för tillägg</span></div>
<div class="tab" style="left:676px;width:47px"><span style="position:absolute;left:6px;top:0px">Tillval</span></div>
<div class="tab" style="left:722px;width:66px"><span style="position:absolute;left:7px;top:0px">Kontering</span></div>
<div class="tab" style="left:787px;width:52px"><span style="position:absolute;left:6px;top:0px">Tjänster</span></div>
<div class="abs" style="left:286px;top:94px;width:58px;height:23px;background:#f9f9f9;border:1px solid #dadada;border-bottom:none"><span style="position:absolute;left:7px;top:0px;line-height:18px">Allmänt</span></div>
<div class="abs" style="left:294px;top:129px;width:581px;height:572px;border:1px solid #dcdcdc"></div>
<div class="abs" style="left:301px;top:120px;padding:0 2px;background:#f9f9f9;line-height:18px">Allmänt</div>
<div class="lbl" style="left:304px;top:152px">Namn:</div>
<div class="lbl" style="left:304px;top:182px">Internetnamn:</div>
<div class="lbl" style="left:304px;top:215px">Beskrivning:</div>
<div class="abs" style="left:462px;top:147px;width:312px;height:21px;background:#ffff00;border:1px solid #e5e5e5;border-bottom:1px solid #868686;border-radius:2px;box-shadow:0 1px 0 #d0d0d0"><span style="position:absolute;left:2px;top:2px;line-height:14px">Ordinarie prislista</span></div>
<div class="abs" style="left:462px;top:176px;width:312px;height:22px;background:#fff;border:1px solid #e5e5e5;border-bottom:1px solid #868686;border-radius:2px;box-shadow:0 1px 0 #d0d0d0"></div>
<div class="abs" style="left:462px;top:209px;width:403px;height:67px;background:#fff;border:1px solid #e5e5e5;border-bottom:1px solid #868686;border-radius:2px;box-shadow:0 1px 0 #d0d0d0">
  <div class="abs" style="left:384px;top:1px;width:16px;height:63px;background:#efefef"></div>
  <svg class="abs" style="left:384px;top:1px" width="16" height="63"><path d="M3.5 12h9l-4.5-6z" fill="#a0a0a0"/><path d="M3.5 53h9l-4.5 6z" fill="#a0a0a0"/></svg>
</div>
<div class="abs" style="left:462px;top:288px;width:13px;height:13px;border:1px solid #555;border-radius:3px;background:#f3f3f3"></div>
<div class="lbl" style="left:479px;top:288px">Privat</div>
<div class="abs" style="left:462px;top:317px;width:13px;height:13px;border-radius:3px;background:#005fb8"><svg width="13" height="13" style="position:absolute;left:0;top:0"><path d="M3.2 6.8l2.2 2.2 4.4-4.6" fill="none" stroke="#fff" stroke-width="1"/></svg></div>
<div class="lbl" style="left:479px;top:317px">Tillgänglig för Internetbeställning</div>
<div class="abs" style="left:462px;top:347px;width:13px;height:13px;border-radius:3px;background:#005fb8"><svg width="13" height="13" style="position:absolute;left:0;top:0"><path d="M3.2 6.8l2.2 2.2 4.4-4.6" fill="none" stroke="#fff" stroke-width="1"/></svg></div>
<div class="lbl" style="left:479px;top:347px">Använd billigaste prissättningen</div>
<div class="lbl" style="left:304px;top:375px">Valuta:</div>
<div class="lbl" style="left:304px;top:406px">Huvudprislista:</div>
<div class="lbl" style="left:302px;top:438px">Momssats:</div>
<div class="lbl" style="left:302px;top:472px">Region:</div>
<div class="lbl" style="left:302px;top:504px">Viktberäkning:</div>
<div class="lbl" style="left:304px;top:549px">Gäller från:</div>
<div class="lbl" style="left:304px;top:584px">Gäller till:</div>
<div class="combo" style="top:369px">Svenska kronor<svg class="abs" style="left:195px;top:9px" width="10" height="6"><path d="M0.5 0.5l4 4 4-4" fill="none" stroke="#555" stroke-width="1.2"/></svg></div>
<div class="combo" style="top:400px">[Ingen]<svg class="abs" style="left:195px;top:9px" width="10" height="6"><path d="M0.5 0.5l4 4 4-4" fill="none" stroke="#555" stroke-width="1.2"/></svg></div>
<div class="combo" style="top:432px">Moms 25%<svg class="abs" style="left:195px;top:9px" width="10" height="6"><path d="M0.5 0.5l4 4 4-4" fill="none" stroke="#555" stroke-width="1.2"/></svg></div>
<div class="combo" style="top:466px">[Ingen]<svg class="abs" style="left:195px;top:9px" width="10" height="6"><path d="M0.5 0.5l4 4 4-4" fill="none" stroke="#555" stroke-width="1.2"/></svg></div>
<div class="combo" style="top:499px">[Standard]<svg class="abs" style="left:195px;top:9px" width="10" height="6"><path d="M0.5 0.5l4 4 4-4" fill="none" stroke="#555" stroke-width="1.2"/></svg></div>

<div class="abs" style="left:680px;top:500px;width:32px;height:25px;border:1px solid #d0d0d0;border-radius:3px;background:#fdfdfd"></div>
<div class="abs" style="left:462px;top:543px;width:133px;height:23px;border:1px solid #7a7a7a;background:#fff;border-radius:2px"><span style="position:absolute;left:1px;top:4px;letter-spacing:-0.4px">2000-01-01</span></div>
<div class="abs" style="left:462px;top:577px;width:133px;height:23px;border:1px solid #7a7a7a;background:#fff;border-radius:2px"><div class="abs" style="left:4px;top:4px;width:13px;height:13px;border:1px solid #555;border-radius:3px;background:#f3f3f3"></div><span style="position:absolute;left:21px;top:4px;color:#8a8a8a;letter-spacing:-0.4px">2023-12-01</span></div>

<svg class="abs" style="left:560px;top:540px" width="40" height="64">
 <g id="cal">
  <rect x="8.5" y="8.5" width="10" height="11" rx="1.5" fill="#e6eaf0" stroke="#6e6262"/>
  <path d="M19 11v8.5a1 1 0 0 1-1 1h-8" fill="none" stroke="#bbb" stroke-width="1"/>
  <g fill="#b0b8c8"><rect x="10" y="10" width="2" height="2"/><rect x="12.5" y="10" width="2" height="2"/><rect x="15" y="10" width="2" height="2"/><rect x="10" y="12.5" width="2" height="2"/><rect x="12.5" y="12.5" width="2" height="2"/><rect x="15" y="12.5" width="2" height="2"/><rect x="10" y="15" width="2" height="2"/><rect x="12.5" y="15" width="2" height="2"/><rect x="15" y="15" width="2" height="2"/></g>
  <path d="M21 12h7l-3.5 4z" fill="#3f5a8c"/>
 </g>
 <use href="#cal" x="0" y="34"/>
</svg>
<svg class="abs" style="left:676px;top:496px" width="40" height="32">
 <path d="M14 22.5l2-5 9.5-9.5 3 3-9.5 9.5z" fill="#f0f000" stroke="#000" stroke-width="1.2" stroke-linejoin="round"/>
 <path d="M17 19.5l9.5-9.5" stroke="#a0a0a0" stroke-width="1"/>
 <path d="M24.5 9l2-2 3 3-2 2z" fill="#e00000" stroke="#000" stroke-width="1"/>
 <path d="M14 22.5l1.2-3 1.8 1.8z" fill="#000"/>
</svg>
<div class="abs" style="left:263px;top:104px;width:2px;height:516px;background:#858585"></div>

<svg class="abs" style="left:0;top:0" width="893" height="726">
<g fill="#f4500e" stroke="none">
 <circle cx="195" cy="78" r="20"/>
 <line x1="181" y1="92" x2="159" y2="116.5" stroke="#f4500e" stroke-width="4"/>
 <path d="M152.4 124.3L155.2 112.3L163.9 119.7z"/>
 <circle cx="245" cy="147" r="20"/>
 <line x1="233" y1="163" x2="211.5" y2="191.5" stroke="#f4500e" stroke-width="4"/>
 <path d="M204.8 200.5L207.2 188.1L216.5 194.6z"/>
 <circle cx="267" cy="222.6" r="20"/>
 <line x1="248" y1="223" x2="184" y2="223" stroke="#f4500e" stroke-width="3.5"/>
 <path d="M173.5 222.8L185 217L185 228.6z"/>
 <circle cx="152.6" cy="492.5" r="20"/>
 <circle cx="147" cy="652.6" r="20"/>
 <rect x="31" y="128" width="11" height="481"/>
 <path d="M15 608.5H58L36.4 652.3z"/>
</g>
<path d="M195 68H198.2V88.9H195V72.6L190.3 76.2L189.6 73.4z" fill="#fff"/>
<g fill="#fff" stroke="#fff" stroke-width="0.3" font-family="Liberation Sans" font-size="29.5" text-anchor="middle">
 <text x="244.7" y="158">2</text>
 <text x="266.8" y="233.4">3</text>
 <text x="152.4" y="503">4</text>
 <text x="147" y="663.4">5</text>
</g>
</svg>
<svg class="abs" style="left:0;top:0" width="893" height="726">
<rect x="0" y="0" width="1" height="1" fill="#444"/>
<path d="M890 0h3v3z" fill="#555"/>
<path d="M893 722v4h-4z" fill="#666"/>
<rect x="273" y="85" width="1" height="2" fill="#6d737d"/>
</svg>
</body></html>
